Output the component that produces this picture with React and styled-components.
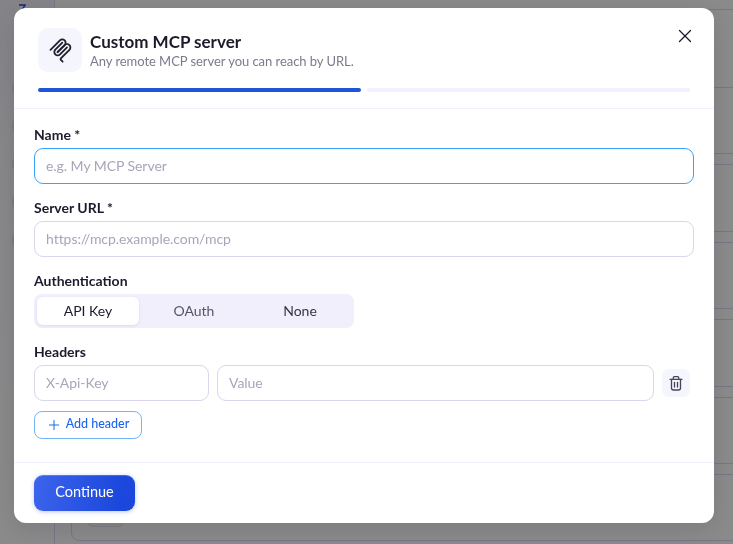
import React from "react";
import styled, { createGlobalStyle } from "styled-components";
import { X, Plus } from "lucide-react";

const Global = createGlobalStyle`
  * { box-sizing: border-box; }
  html, body { margin: 0; height: 100%; overflow: hidden; background: #fff; }
  body { font-family: Lato, "Noto Sans", sans-serif; color: #1b1b2b; }
  #root { height: 100%; }
  input, button { font-family: inherit; }
`;

const Page = styled.div`
  display: flex;
  height: 544px;
  width: 733px;
  overflow: hidden;
`;
const Sidebar = styled.aside`
  width: 55px;
  flex: none;
  border-right: 1px solid #dcdaf5;
  background: linear-gradient(#f2f2fb, #fafafd 30%, #fff);
  padding: 4px 12px 0;
  display: flex;
  flex-direction: column;
  gap: 26px;
`;
const SideLogo = styled.svg`
  display: block;
  margin: 0 0 46px 7px;
  flex: none;
`;
const SideIcon = styled.span`
  display: block;
  width: 14px;
  height: 12px;
  border-radius: 4px;
  background: #e7e6f4;
`;
const Main = styled.main`
  flex: 1;
  min-width: 0;
`;
const TopBar = styled.div`
  height: 10px;
  border-bottom: 1px solid #dcdaf5;
`;
const CardList = styled.div`
  display: flex;
  flex-direction: column;
  gap: 10px;
  padding: 77px 0 0 16px;
  margin-right: -30px;
`;
const BgCard = styled.div`
  height: 67.4px;
  flex: none;
  border: 1px solid #dcdaf5;
  border-radius: 8px;
  padding: 28px 15px 0;
`;
const BgPill = styled.div`
  width: 37px;
  height: 24px;
  border: 1px solid #e4e3ee;
  border-radius: 6px;
  background: #f7f7f5;
`;

const Overlay = styled.div`
  position: fixed;
  inset: 0;
  background: rgba(0, 0, 0, 0.46);
`;
const Modal = styled.div`
  position: fixed;
  top: 8px;
  left: 14px;
  width: 700px;
  height: 515px;
  background: #fff;
  border-radius: 12px;
  display: flex;
  flex-direction: column;
  box-shadow: 0 6px 24px rgba(20, 20, 50, 0.12);
`;
const Header = styled.header`
  padding: 20px 24px 16px;
  border-bottom: 1px solid #f1f0fc;
`;
const HeadRow = styled.div`
  display: flex;
  align-items: center;
  gap: 8px;
`;
const LogoTile = styled.div`
  width: 44px;
  height: 44px;
  border-radius: 10px;
  background: #f5f5fe;
  display: flex;
  align-items: center;
  justify-content: center;
`;
const Titles = styled.div`
  display: flex;
  flex-direction: column;
  margin-top: -1px;
`;
const Title = styled.h2`
  margin: 0;
  font-size: 17px;
  line-height: 22px;
  font-weight: 700;
  color: #1b1b2b;
`;
const Sub = styled.p`
  margin: 0;
  font-size: 13px;
  line-height: 16px;
  letter-spacing: -0.05px;
  color: #7b7b8e;
`;
const CloseBtn = styled.button`
  position: absolute;
  top: 17px;
  right: 18px;
  width: 22px;
  height: 22px;
  padding: 0;
  border: 0;
  background: none;
  color: #1b1b2b;
  display: flex;
`;
const Steps = styled.div`
  display: grid;
  grid-template-columns: 1fr 1fr;
  gap: 6px;
  margin-top: 16px;
`;
const Step = styled.div`
  height: 4px;
  border-radius: 2px;
  background: ${(p) => (p.$active ? "#1f55d8" : "#f1f0fc")};
`;
const Body = styled.div`
  flex: 1;
  padding: 16px 20px 0;
  display: flex;
  flex-direction: column;
  gap: 14px;
`;
const Field = styled.div`
  display: flex;
  flex-direction: column;
  gap: 5px;
  align-items: flex-start;
`;
const Label = styled.label`
  font-size: 14px;
  line-height: 17px;
  padding-top: 1px;
  font-weight: 700;
  color: #1b1b2b;
`;
const Input = styled.input`
  height: 36px;
  width: ${(p) => p.$width || "100%"};
  flex: ${(p) => (p.$grow ? 1 : "none")};
  min-width: 0;
  border: 1px solid ${(p) => (p.$focus ? "#38a3f7" : "#d9d5ec")};
  border-radius: 9px;
  padding: 0 11px 2px;
  font-size: 14px;
  letter-spacing: -0.05px;
  color: #1b1b2b;
  background: #fff;
  outline: none;
  &::placeholder { color: #a6a6ba; opacity: 1; }
`;
const Segment = styled.div`
  width: 320px;
  height: 34px;
  padding: 3px;
  border-radius: 8px;
  background: #f0effb;
  display: grid;
  grid-template-columns: repeat(3, 1fr);
  gap: 4px;
`;
const SegBtn = styled.button`
  border: 0;
  padding: 0 0 2px;
  border-radius: 6px;
  font-size: 14px;
  color: ${(p) => (p.$active ? "#1b1b2b" : p.$muted ? "#55556a" : "#35354a")};
  background: ${(p) => (p.$active ? "#fff" : "transparent")};
  box-shadow: ${(p) => (p.$active ? "0 1px 3px rgba(40,40,90,.1)" : "none")};
`;
const HeaderRow = styled.div`
  display: flex;
  align-items: center;
  gap: 8px;
  width: 100%;
`;
const TrashBtn = styled.button`
  width: 28px;
  height: 28px;
  margin-right: 4px;
  flex: none;
  border: 0;
  padding: 0;
  border-radius: 7px;
  background: #f5f5fe;
  color: #45455a;
  display: flex;
  align-items: center;
  justify-content: center;
`;
const AddBtn = styled.button`
  margin-top: 5px;
  width: 108px;
  height: 28px;
  border: 1px solid #73b5f9;
  border-radius: 8px;
  background: #fff;
  color: #1a66f0;
  font-size: 12.5px;
  font-weight: 500;
  padding: 0 1px 3px 0;
  display: flex;
  align-items: center;
  justify-content: center;
  gap: 4px;
`;
const AddIcon = styled(Plus)`
  margin-top: 3px;
`;
const Footer = styled.footer`
  border-top: 1px solid #f1f0fc;
  padding: 12px 20px;
`;
const Continue = styled.button`
  width: 101px;
  height: 36px;
  border: 0;
  border-radius: 9px;
  padding: 0 0 4px;
  color: #fff;
  font-size: 14.5px;
  background: linear-gradient(100deg, #3c64ec, #1b47dc 85%);
  box-shadow: inset 0 1px 0 rgba(255, 255, 255, 0.18), 0 1px 4px rgba(40, 70, 200, 0.3);
`;

const McpLogo = () => (
  <svg width="25" height="25" viewBox="0 0 180 180" fill="none" stroke="#1f1f2e" strokeWidth="13" strokeLinecap="round">
    <path d="M18 84.8528L85.8822 16.9706C95.2548 7.59798 110.451 7.59798 119.823 16.9706C129.196 26.3431 129.196 41.5391 119.823 50.9117L68.5581 102.177" />
    <path d="M69.2652 101.47L119.823 50.9117C129.196 41.5391 144.392 41.5391 153.765 50.9117L154.118 51.2652C163.491 60.6378 163.491 75.8338 154.118 85.2063L92.7248 146.6C89.6006 149.724 89.6006 154.789 92.7248 157.913L105.331 170.52" />
    <path d="M102.853 33.9411L52.6482 84.1457C43.2756 93.5183 43.2756 108.714 52.6482 118.087C62.0208 127.459 77.2167 127.459 86.5893 118.087L136.794 67.8822" />
  </svg>
);

const TrashIcon = () => (
  <svg width="16" height="16" viewBox="0 0 16 16" fill="none" stroke="currentColor" strokeWidth="1.3" strokeLinecap="round" strokeLinejoin="round">
    <path d="M2 4.3H14" />
    <path d="M5.3 4V2.6a1 1 0 0 1 1-1h3.4a1 1 0 0 1 1 1V4" />
    <path d="M3.5 4.5V13a2 2 0 0 0 2 2h5a2 2 0 0 0 2-2V4.5" />
    <path d="M6.5 7.5V12" />
    <path d="M9.5 7.5V12" />
  </svg>
);

export default function App() {
  return (
    <>
      <Global />
      <Page>
        <Sidebar>
          <SideLogo width="7" height="6" viewBox="0 0 7 6" fill="none" stroke="#2447c8" strokeWidth="1.4">
            <path d="M0 1H6L3 6" />
          </SideLogo>
          {[0, 1, 2, 3, 4].map((i) => <SideIcon key={i} />)}
        </Sidebar>
        <Main>
          <TopBar />
          <CardList>
            {[0, 1, 2, 3, 4].map((i) => <BgCard key={i} />)}
            <BgCard><BgPill /></BgCard>
          </CardList>
        </Main>
      </Page>
      <Overlay />
      <Modal>
        <Header>
          <HeadRow>
            <LogoTile><McpLogo /></LogoTile>
            <Titles>
              <Title>Custom MCP server</Title>
              <Sub>Any remote MCP server you can reach by URL.</Sub>
            </Titles>
          </HeadRow>
          <CloseBtn aria-label="Close"><X size={22} strokeWidth={1.4} /></CloseBtn>
          <Steps>
            <Step $active />
            <Step />
          </Steps>
        </Header>
        <Body>
          <Field>
            <Label>Name *</Label>
            <Input $focus placeholder="e.g. My MCP Server" />
          </Field>
          <Field>
            <Label>Server URL *</Label>
            <Input placeholder="https://mcp.example.com/mcp" />
          </Field>
          <Field>
            <Label>Authentication</Label>
            <Segment>
              <SegBtn $active>API Key</SegBtn>
              <SegBtn $muted>OAuth</SegBtn>
              <SegBtn>None</SegBtn>
            </Segment>
          </Field>
          <Field>
            <Label>Headers</Label>
            <HeaderRow>
              <Input $width="175px" placeholder="X-Api-Key" />
              <Input $grow placeholder="Value" />
              <TrashBtn aria-label="Remove"><TrashIcon /></TrashBtn>
            </HeaderRow>
            <AddBtn><AddIcon size={16} strokeWidth={1.5} />Add header</AddBtn>
          </Field>
        </Body>
        <Footer>
          <Continue>Continue</Continue>
        </Footer>
      </Modal>
    </>
  );
}
